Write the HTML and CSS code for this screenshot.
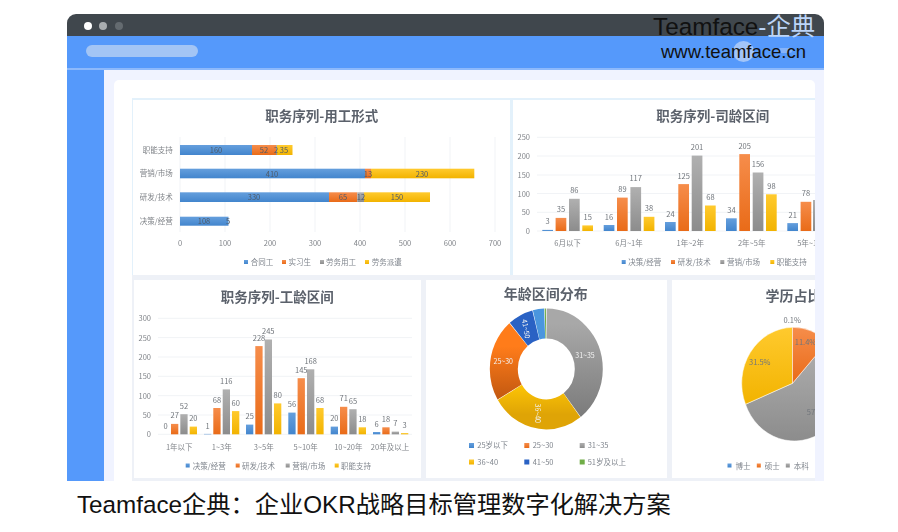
FILE: index.html
```html
<!DOCTYPE html>
<html lang="zh-CN">
<head>
    <meta charset="UTF-8">
    <meta name="viewport" content="width=device-width, initial-scale=1.0">
    <title>Teamface企典</title>
    <link rel="stylesheet" href="styles.css">
</head>
<body>
    <div class="window">
        <div class="title-bar">
            <span class="dot dot-1"></span>
            <span class="dot dot-2"></span>
            <span class="dot dot-3"></span>
        </div>
        <div class="nav-bar">
            <div class="search-pill"></div>
            <div class="avatar"></div>
            <div class="nav-mark"></div>
        </div>
        <div class="main">
            <div class="sidebar"></div>
            <div class="content">
                <div class="panel">
                    <div class="chart-row chart-row-top">
                        <!-- 用工形式 -->
                        <svg class="chart chart-a" viewBox="133 100 377 175">
                            <defs>
                                <linearGradient id="grad-blue" x1="0" y1="0" x2="0" y2="1"><stop offset="0" stop-color="#659fdd"/><stop offset="1" stop-color="#4285cd"/></linearGradient>
                                <linearGradient id="grad-orange" x1="0" y1="0" x2="0" y2="1"><stop offset="0" stop-color="#f68d4b"/><stop offset="1" stop-color="#e96b18"/></linearGradient>
                                <linearGradient id="grad-gray" x1="0" y1="0" x2="0" y2="1"><stop offset="0" stop-color="#b0b0b0"/><stop offset="1" stop-color="#8c8c8c"/></linearGradient>
                                <linearGradient id="grad-yellow" x1="0" y1="0" x2="0" y2="1"><stop offset="0" stop-color="#ffca2e"/><stop offset="1" stop-color="#f2b300"/></linearGradient>
                                <linearGradient id="ring-gray" x1="1" y1="0" x2="0" y2="0"><stop offset="0" stop-color="#a8a8a8"/><stop offset="1" stop-color="#7c7c7c"/></linearGradient>
                                <linearGradient id="ring-orange" x1="1" y1="0" x2="0" y2="0"><stop offset=".25" stop-color="#ff7c1a"/><stop offset=".8" stop-color="#c55a11"/></linearGradient>
                                <linearGradient id="ring-yellow" x1="1" y1="0" x2="0" y2="0"><stop offset=".65" stop-color="#ffc705"/><stop offset="1" stop-color="#dfa406"/></linearGradient>
                            </defs>
                            <text class="title" x="321.7" y="121">职务序列-用工形式</text>
                            <g class="grid">
                                <path d="M180 137V232M225 137V232M270 137V232M315 137V232M360 137V232M405 137V232M450 137V232M495 137V232"/>
                            </g>
                            <g class="cat end">
                                <text x="172.7" y="153">职能支持</text>
                                <text x="172.7" y="176">营销/市场</text>
                                <text x="172.7" y="200">研发/技术</text>
                                <text x="172.7" y="224">决策/经营</text>
                            </g>
                            <rect class="blue" x="180" y="145" width="72" height="10"/>
                            <rect class="orange" x="252" y="145" width="24" height="10"/>
                            <rect class="gray" x="276" y="145" width="1" height="10"/>
                            <rect class="yellow" x="277" y="145" width="15.5" height="10"/>
                            <rect class="blue" x="180" y="168.7" width="185" height="9.6"/>
                            <rect class="orange" x="365" y="168.7" width="6" height="9.6"/>
                            <rect class="yellow" x="371" y="168.7" width="103.3" height="9.6"/>
                            <rect class="blue" x="180" y="192.3" width="149" height="9.7"/>
                            <rect class="orange" x="329" y="192.3" width="28.3" height="9.7"/>
                            <rect class="gray" x="357.3" y="192.3" width="6.7" height="9.7"/>
                            <rect class="yellow" x="364" y="192.3" width="66" height="9.7"/>
                            <rect class="blue" x="180" y="216.7" width="48.5" height="9"/>
                            <g class="inbar">
                                <text x="216" y="153">160</text>
                                <text x="264" y="153">52</text>
                                <text x="276" y="153">2</text>
                                <text x="284" y="153">35</text>
                                <text x="272" y="176.5">410</text>
                                <text x="368" y="176.5">13</text>
                                <text x="422" y="176.5">230</text>
                                <text x="254" y="200">330</text>
                                <text x="343" y="200">65</text>
                                <text x="361" y="200">12</text>
                                <text x="397" y="200">150</text>
                                <text x="204" y="224">108</text>
                                <text x="228" y="224">5</text>
                            </g>
                            <g class="cat">
                                <text x="180" y="245.5">0</text>
                                <text x="225" y="245.5">100</text>
                                <text x="270" y="245.5">200</text>
                                <text x="315" y="245.5">300</text>
                                <text x="360" y="245.5">400</text>
                                <text x="405" y="245.5">500</text>
                                <text x="450" y="245.5">600</text>
                                <text x="495" y="245.5">700</text>
                            </g>
                            <g class="legend">
                                <rect class="blue" x="244" y="260" width="4" height="4"/><text x="250.7" y="265">合同工</text>
                                <rect class="orange" x="282" y="260" width="4" height="4"/><text x="288.5" y="265">实习生</text>
                                <rect class="gray" x="320" y="260" width="4" height="4"/><text x="326" y="265">劳务用工</text>
                                <rect class="yellow" x="365" y="260" width="4" height="4"/><text x="371.7" y="265">劳务派遣</text>
                            </g>
                        </svg>
                        <!-- 司龄区间 -->
                        <svg class="chart chart-b" viewBox="513 100 302 175">
                            <text class="title" x="712.7" y="121">职务序列-司龄区间</text>
                            <g class="grid">
                                <path d="M537 137.3H815M537 156H815M537 175H815M537 193.5H815M537 212.3H815M537 231H815"/>
                            </g>
                            <g class="cat end">
                                <text x="530" y="140">250</text>
                                <text x="530" y="159">200</text>
                                <text x="530" y="178">150</text>
                                <text x="530" y="196.5">100</text>
                                <text x="530" y="215">50</text>
                                <text x="530" y="234">0</text>
                            </g>
                            <rect class="blue" x="542.3" y="229.9" width="10.7" height="1.1"/>
                            <rect class="orange" x="555.6" y="217.9" width="10.7" height="13.1"/>
                            <rect class="gray" x="569" y="198.8" width="10.7" height="32.2"/>
                            <rect class="yellow" x="582.3" y="225.4" width="10.7" height="5.6"/>
                            <rect class="blue" x="603.7" y="225" width="10.7" height="6"/>
                            <rect class="orange" x="617" y="197.6" width="10.7" height="33.4"/>
                            <rect class="gray" x="630.4" y="187.1" width="10.7" height="43.9"/>
                            <rect class="yellow" x="643.7" y="216.8" width="10.7" height="14.2"/>
                            <rect class="blue" x="665" y="222" width="10.7" height="9"/>
                            <rect class="orange" x="678.3" y="184.1" width="10.7" height="46.9"/>
                            <rect class="gray" x="691.7" y="155.6" width="10.7" height="75.4"/>
                            <rect class="yellow" x="705" y="205.5" width="10.7" height="25.5"/>
                            <rect class="blue" x="726" y="218.3" width="10.7" height="12.7"/>
                            <rect class="orange" x="739.3" y="154.1" width="10.7" height="76.9"/>
                            <rect class="gray" x="752.7" y="172.5" width="10.7" height="58.5"/>
                            <rect class="yellow" x="766" y="194.3" width="10.7" height="36.7"/>
                            <rect class="blue" x="787.3" y="223.1" width="10.7" height="7.9"/>
                            <rect class="orange" x="800.6" y="201.8" width="10.7" height="29.2"/>
                            <rect class="gray" x="813" y="200" width="10.7" height="31"/>
                            <g class="val">
                                <text x="547.7" y="224">3</text>
                                <text x="561" y="212">35</text>
                                <text x="574.3" y="193">86</text>
                                <text x="587.7" y="219.5">15</text>
                                <text x="609" y="219.5">16</text>
                                <text x="622.4" y="192">89</text>
                                <text x="635.7" y="181">117</text>
                                <text x="649" y="211">38</text>
                                <text x="670.4" y="216.5">24</text>
                                <text x="683.7" y="178.5">125</text>
                                <text x="697" y="150">201</text>
                                <text x="710.4" y="200">68</text>
                                <text x="731.4" y="212.5">34</text>
                                <text x="744.7" y="148.5">205</text>
                                <text x="758" y="167">156</text>
                                <text x="771.4" y="188.5">98</text>
                                <text x="792.7" y="217.5">21</text>
                                <text x="806" y="196">78</text>
                            </g>
                            <g class="cat">
                                <text x="567.7" y="246">6月以下</text>
                                <text x="629" y="246">6月~1年</text>
                                <text x="690.3" y="246">1年~2年</text>
                                <text x="751.7" y="246">2年~5年</text>
                                <text x="813" y="246">5年~10年</text>
                            </g>
                            <g class="legend">
                                <rect class="blue" x="621.7" y="260" width="4" height="4"/><text x="628.3" y="265">决策/经营</text>
                                <rect class="orange" x="671" y="260" width="4" height="4"/><text x="677.7" y="265">研发/技术</text>
                                <rect class="gray" x="720.3" y="260" width="4" height="4"/><text x="727" y="265">营销/市场</text>
                                <rect class="yellow" x="770.3" y="260" width="4" height="4"/><text x="776.7" y="265">职能支持</text>
                            </g>
                        </svg>
                    </div>
                    <div class="chart-row chart-row-bottom">
                        <!-- 工龄区间 -->
                        <svg class="chart chart-c" viewBox="134 280 287 198">
                            <text class="title" x="277.3" y="302">职务序列-工龄区间</text>
                            <g class="grid">
                                <path d="M158 318.3H412M158 337.6H412M158 357H412M158 376.3H412M158 395.7H412M158 415H412M158 434.3H412"/>
                            </g>
                            <g class="cat end">
                                <text x="151" y="321">300</text>
                                <text x="151" y="340.5">250</text>
                                <text x="151" y="360">200</text>
                                <text x="151" y="379">150</text>
                                <text x="151" y="398.5">100</text>
                                <text x="151" y="418">50</text>
                                <text x="151" y="437">0</text>
                            </g>
                            <rect class="orange" x="171" y="423.9" width="7.3" height="10.4"/>
                            <rect class="gray" x="180.3" y="414.2" width="7.3" height="20.1"/>
                            <rect class="yellow" x="189.7" y="426.6" width="7.3" height="7.7"/>
                            <rect class="blue" x="204" y="433.9" width="7.3" height="0.4"/>
                            <rect class="orange" x="213.3" y="408" width="7.3" height="26.3"/>
                            <rect class="gray" x="222.7" y="389.4" width="7.3" height="44.9"/>
                            <rect class="yellow" x="232" y="411.1" width="7.3" height="23.2"/>
                            <rect class="blue" x="246" y="424.6" width="7.3" height="9.7"/>
                            <rect class="orange" x="255.3" y="346.1" width="7.3" height="88.2"/>
                            <rect class="gray" x="264.7" y="339.5" width="7.3" height="94.8"/>
                            <rect class="yellow" x="274" y="403.4" width="7.3" height="30.9"/>
                            <rect class="blue" x="288.3" y="412.6" width="7.3" height="21.7"/>
                            <rect class="orange" x="297.6" y="378.2" width="7.3" height="56.1"/>
                            <rect class="gray" x="307" y="369.3" width="7.3" height="65"/>
                            <rect class="yellow" x="316.3" y="408" width="7.3" height="26.3"/>
                            <rect class="blue" x="330.7" y="426.6" width="7.3" height="7.7"/>
                            <rect class="orange" x="340" y="406.8" width="7.3" height="27.5"/>
                            <rect class="gray" x="349.3" y="409.2" width="7.3" height="25.1"/>
                            <rect class="yellow" x="358.7" y="427.3" width="7.3" height="7"/>
                            <rect class="blue" x="373" y="432" width="7.3" height="2.3"/>
                            <rect class="orange" x="382.3" y="427.3" width="7.3" height="7"/>
                            <rect class="gray" x="391.7" y="431.6" width="7.3" height="2.7"/>
                            <rect class="yellow" x="401" y="433.1" width="7.3" height="1.2"/>
                            <g class="val">
                                <text x="165.5" y="428.5">0</text>
                                <text x="174.7" y="418">27</text>
                                <text x="184" y="408.5">52</text>
                                <text x="193.3" y="421">20</text>
                                <text x="207.5" y="429">1</text>
                                <text x="217" y="402.5">68</text>
                                <text x="226.3" y="384">116</text>
                                <text x="235.7" y="405.5">60</text>
                                <text x="249.7" y="419">25</text>
                                <text x="259" y="340.5">228</text>
                                <text x="268.3" y="334">245</text>
                                <text x="277.7" y="398">80</text>
                                <text x="292" y="407">56</text>
                                <text x="301.3" y="372.5">145</text>
                                <text x="310.7" y="364">168</text>
                                <text x="320" y="402.5">68</text>
                                <text x="334.3" y="421">20</text>
                                <text x="343.7" y="401">71</text>
                                <text x="353" y="403.5">65</text>
                                <text x="362.3" y="421.5">18</text>
                                <text x="376.7" y="426.5">6</text>
                                <text x="386" y="421.5">18</text>
                                <text x="395.3" y="425.5">7</text>
                                <text x="404.7" y="427.5">3</text>
                            </g>
                            <g class="cat">
                                <text x="179.3" y="449.5">1年以下</text>
                                <text x="221.7" y="449.5">1~3年</text>
                                <text x="263.7" y="449.5">3~5年</text>
                                <text x="305.7" y="449.5">5~10年</text>
                                <text x="348.3" y="449.5">10~20年</text>
                                <text x="390" y="449.5">20年及以上</text>
                            </g>
                            <g class="legend">
                                <rect class="blue" x="185.7" y="463.5" width="4" height="4"/><text x="192.7" y="468.5">决策/经营</text>
                                <rect class="orange" x="235.7" y="463.5" width="4" height="4"/><text x="242" y="468.5">研发/技术</text>
                                <rect class="gray" x="285.7" y="463.5" width="4" height="4"/><text x="292.3" y="468.5">营销/市场</text>
                                <rect class="yellow" x="334.7" y="463.5" width="4" height="4"/><text x="341" y="468.5">职能支持</text>
                            </g>
                        </svg>
                        <!-- 年龄区间分布 -->
                        <svg class="chart chart-d" viewBox="426 280 241 198">
                            <text class="title" x="545.7" y="299">年龄区间分布</text>
                            <g class="ring">
                                <circle class="seg-gray" cx="546.3" cy="369" r="42.5" pathLength="360" stroke-dasharray="142 360" stroke-dashoffset="-.4"/>
                                <circle class="seg-yellow" cx="546.3" cy="369" r="42.5" pathLength="360" stroke-dasharray="96 360" stroke-dashoffset="-143"/>
                                <circle class="seg-orange" cx="546.3" cy="369" r="42.5" pathLength="360" stroke-dasharray="79.6 360" stroke-dashoffset="-239.6"/>
                                <circle class="seg-navy" cx="546.3" cy="369" r="42.5" pathLength="360" stroke-dasharray="25.8 360" stroke-dashoffset="-319.8"/>
                                <circle class="seg-sky" cx="546.3" cy="369" r="42.5" pathLength="360" stroke-dasharray="11.5 360" stroke-dashoffset="-346.2"/>
                                <circle class="seg-green" cx="546.3" cy="369" r="42.5" pathLength="360" stroke-dasharray="1.3 360" stroke-dashoffset="-358.3"/>
                            </g>
                            <g class="ring-label">
                                <text x="585" y="357.5">31~35</text>
                                <text x="503.3" y="364">25~30</text>
                                <text transform="translate(535 413.3) rotate(90)">36~40</text>
                                <text transform="translate(523.5 329.3) rotate(80)">41~50</text>
                            </g>
                            <g class="legend">
                                <rect class="blue" x="469" y="443" width="5" height="5"/><text x="477.3" y="448">25岁以下</text>
                                <rect class="orange" x="524.3" y="443" width="5" height="5"/><text x="532.7" y="448">25~30</text>
                                <rect class="gray" x="579.7" y="443" width="5" height="5"/><text x="587.7" y="448">31~35</text>
                                <rect class="yellow" x="469" y="459.5" width="5" height="5"/><text x="477.3" y="465">36~40</text>
                                <rect class="navy" x="524.3" y="459.5" width="5" height="5"/><text x="532.7" y="465">41~50</text>
                                <rect class="green" x="579.7" y="459.5" width="5" height="5"/><text x="587.7" y="465">51岁及以上</text>
                            </g>
                        </svg>
                        <!-- 学历占比 -->
                        <svg class="chart chart-e" viewBox="671.5 280 143.5 198">
                            <text class="title" x="793" y="301">学历占比</text>
                            <path class="gray" stroke="#fff" stroke-width=".5" d="M792 383.3L826.8 341.7A52 56 0 1 1 745 404.3Z"/>
                            <path class="yellow" stroke="#fff" stroke-width=".5" d="M792 383.3L745 404.3A52 56 0 0 1 792 327.3Z"/>
                            <path class="orange" stroke="#fff" stroke-width=".5" d="M792 383.3V327.3A52 56 0 0 1 826.8 341.7Z"/>
                            <g class="val">
                                <text x="791.7" y="323">0.1%</text>
                                <text x="759.3" y="364.5">31.5%</text>
                                <text x="805" y="345">11.4%</text>
                                <text x="817" y="414.5">57.0%</text>
                            </g>
                            <g class="legend">
                                <rect class="blue" x="727" y="463.5" width="4" height="4"/><text x="735" y="468.5">博士</text>
                                <rect class="orange" x="756.3" y="463.5" width="4" height="4"/><text x="764.3" y="468.5">硕士</text>
                                <rect class="gray" x="785.3" y="463.5" width="4" height="4"/><text x="793.3" y="468.5">本科</text>
                            </g>
                        </svg>
                    </div>
                </div>
            </div>
        </div>
    </div>
    <div class="brand">
        <div class="brand-name">Teamface<span class="brand-light">-企典</span></div>
        <div class="brand-url">www.teamface.cn</div>
    </div>
    <p class="caption">Teamface企典：企业OKR战略目标管理数字化解决方案</p>
</body>
</html>
```

FILE: styles.css
```css
* {
    margin: 0;
    padding: 0;
    box-sizing: border-box;
}

body {
    position: relative;
    background: white;
    font-family: "Liberation Sans", "Noto Sans CJK SC", sans-serif;
    overflow: hidden;
}

.window {
    width: 757px;
    margin: 14px 0 0 67px;
}

.title-bar {
    display: flex;
    align-items: center;
    gap: 7.6px;
    height: 22px;
    padding: 1px 0 0 16.7px;
    background: #40474d;
    border-radius: 9px 9px 0 0;
}

.dot {
    width: 8px;
    height: 8px;
    border-radius: 50%;
}

.dot-1 { background: white; }
.dot-2 { background: #a9adb0; }
.dot-3 { background: #646b70; }

.nav-bar {
    position: relative;
    display: flex;
    align-items: center;
    height: 34px;
    padding: 0 0 2px 18.7px;
    background: #5599fb;
    border-bottom: 2px solid #8db9fb;
}

.search-pill {
    width: 112px;
    height: 12px;
    border-radius: 6px;
    background: #a3c5f5;
}

.avatar {
    position: absolute;
    left: 666px;
    top: 5px;
    width: 21px;
    height: 21px;
    border-radius: 50%;
    background: #a3c5f8;
}

.nav-mark {
    position: absolute;
    left: 711px;
    top: 12px;
    width: 14px;
    height: 5px;
    border-radius: 3px;
    background: #86b4fa;
}

.main {
    display: flex;
    height: 411px;
}

.sidebar {
    width: 37.5px;
    background: #5599fb;
}

.content {
    flex: 1;
    padding: 10px 9px 0 10px;
    background: #f0f3ff;
}

.panel {
    display: flex;
    flex-direction: column;
    height: 100%;
    padding: 18px 0 0 18px;
    background: white;
    border-radius: 5px 5px 0 0;
}

.chart-row {
    display: flex;
}

.chart-row-top {
    gap: 3px;
    height: 177px;
    padding: 2px 0 0 1px;
    background: #e3f1fb;
}

.chart-row-bottom {
    flex: 1;
    padding: 5px 0 3px 2px;
    background: #eef1f7;
}

.chart {
    display: block;
    height: 100%;
    background: white;
    filter: blur(0.6px);
    font-family: "Noto Sans CJK SC", "Liberation Sans", sans-serif;
}

.chart-a { width: 377px; }
.chart-b { width: 302px; }
.chart-c { width: 287px; margin-right: 5px; }
.chart-d { width: 241px; margin-right: 4.5px; }
.chart-e { width: 143.5px; }

.title {
    font-size: 13.5px;
    font-weight: 700;
    fill: #5b616b;
    text-anchor: middle;
}

.chart-d .title,
.chart-e .title {
    font-size: 14px;
}

.grid path {
    fill: none;
    stroke: #f1f3f6;
    stroke-width: 1;
}

.cat text,
.val text {
    font-size: 7.5px;
    fill: #808489;
    text-anchor: middle;
}

.cat.end text {
    text-anchor: end;
}

.val text {
    fill: #70757b;
}

.inbar text {
    font-size: 7.5px;
    fill: #4e5a68;
    text-anchor: middle;
}

.legend text {
    font-size: 7.5px;
    fill: #80868e;
}

.blue { fill: url(#grad-blue); }
.orange { fill: url(#grad-orange); }
.gray { fill: url(#grad-gray); }
.yellow { fill: url(#grad-yellow); }
.navy { fill: #2a62c4; }
.green { fill: #70ad47; }

.ring circle {
    fill: none;
    stroke-width: 28;
    transform: scaleY(1.07) rotate(-90deg);
    transform-origin: 546.3px 369px;
}

.ring .seg-gray { stroke: url(#ring-gray); }
.ring .seg-yellow { stroke: url(#ring-yellow); }
.ring .seg-orange { stroke: url(#ring-orange); }
.ring .seg-navy { stroke: #2a62c4; }
.ring .seg-sky { stroke: #4a96de; }
.ring .seg-green { stroke: #70ad47; }

.ring-label text {
    font-size: 7px;
    fill: #f3f3f3;
    text-anchor: middle;
}

.brand {
    position: absolute;
    top: 13px;
    left: 653px;
    color: #111;
}

.brand-name {
    font-size: 24.3px;
    line-height: 27px;
    white-space: nowrap;
}

.brand-light {
    color: #bcd5f8;
}

.brand-url {
    font-size: 18.5px;
    line-height: 22px;
    margin: 1px 0 0 8px;
    white-space: nowrap;
}

.caption {
    margin: 8px 0 0 77px;
    font-size: 24.24px;
    line-height: 32px;
    color: #111;
    white-space: nowrap;
}
```
